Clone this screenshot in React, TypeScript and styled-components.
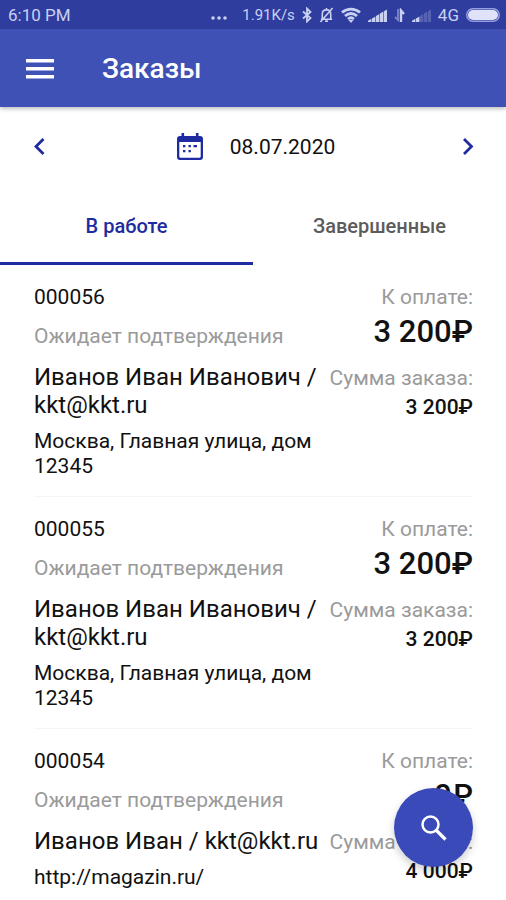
import React, { useState } from "react";
import styled, { createGlobalStyle } from "styled-components";

const colors = {
  statusBar: "#2f3d9e",
  primary: "#3f51b5",
  floating: "#3a4ab8",
  accent: "#1f2ba0",
  statusInk: "#c9d0f2",
  text: "#111111",
  muted: "#9a9a9a",
};

const GlobalStyle = createGlobalStyle`
  *, *::before, *::after { box-sizing: border-box; }
  body {
    margin: 0;
    background: #ffffff;
    color: ${colors.text};
    font-family: Roboto, "Noto Sans", sans-serif;
  }
  h1, h2, p, dl, dt, dd, ul { margin: 0; padding: 0; font-weight: 400; }
  button {
    border: 0;
    padding: 0;
    background: none;
    color: inherit;
    font-family: inherit;
    cursor: pointer;
  }
`;

const Screen = styled.div`
  display: flex;
  flex-direction: column;
  height: 100vh;
  overflow: hidden;
`;

const StatusBar = styled.div`
  display: flex;
  flex: none;
  align-items: center;
  justify-content: space-between;
  height: 29px;
  padding: 1px 6px 0 8px;
  background: ${colors.statusBar};
  color: ${colors.statusInk};
  font-size: 17px;
  line-height: 20px;
`;

const StatusGroup = styled.div`
  display: flex;
  align-items: center;
  gap: 7px;

  svg { display: block; }
`;

const NetworkSpeed = styled.span`
  padding-left: 8px;
  font-size: 15px;
`;

const AppBar = styled.header`
  position: relative;
  display: flex;
  flex: none;
  align-items: center;
  gap: 48px;
  height: 78px;
  padding: 2px 26px 0;
  background: ${colors.primary};
  color: #ffffff;
  box-shadow: 0 2px 4px rgba(0, 0, 0, 0.25);
`;

const IconButton = styled.button`
  display: grid;
  place-items: center;

  svg { display: block; }
`;

const Title = styled.h1`
  font-size: 28px;
  font-weight: 500;
  line-height: 32px;
`;

const DateBar = styled.div`
  display: flex;
  flex: none;
  align-items: center;
  justify-content: space-between;
  height: 80px;
  padding: 0 32px;
  color: ${colors.accent};
`;

const DateButton = styled.button`
  display: flex;
  align-items: center;
  gap: 27px;
  padding-left: 6px;
  font-size: 21px;
  line-height: 24px;

  time { color: ${colors.text}; }
  svg { display: block; }
`;

const Tabs = styled.div`
  display: grid;
  flex: none;
  grid-template-columns: 1fr 1fr;
  height: 78px;
`;

const Tab = styled.button<{ $active: boolean }>`
  border-top: 3px solid transparent;
  border-bottom: 3px solid ${(p) => (p.$active ? colors.accent : "transparent")};
  color: ${(p) => (p.$active ? colors.accent : "#5c5c5c")};
  font-size: 20px;
  font-weight: 500;
  line-height: 24px;
`;

const OrderList = styled.ul`
  flex: 1;
  min-height: 0;
  padding: 0 33px 0 34px;
  overflow-y: auto;
  scrollbar-width: none;
  list-style: none;
`;

const OrderItem = styled.li`
  display: flex;
  justify-content: space-between;
  gap: 8px;
  padding: 20px 0 18px;
  border-bottom: 1px solid #f5f5f5;
`;

const Details = styled.div`
  flex: 1;
  min-width: 0;
`;

const OrderNumber = styled.h2`
  font-size: 21px;
  line-height: 24px;
`;

const OrderState = styled.p`
  margin-top: 15px;
  color: ${colors.muted};
  font-size: 21px;
  line-height: 24px;
`;

const Customer = styled.p`
  margin-top: 15px;
  font-size: 24px;
  line-height: 28px;
`;

const Address = styled.p`
  margin-top: 10px;
  font-size: 21px;
  line-height: 25px;
`;

const Totals = styled.dl`
  flex: none;
  text-align: right;
`;

const TotalLabel = styled.dt`
  color: ${colors.muted};
  font-size: 21px;
  line-height: 24px;
`;

const Total = styled.dd<{ $large?: boolean }>`
  margin: ${(p) => (p.$large ? "7px 0 18px" : "5px 0 0")};
  font-size: ${(p) => (p.$large ? 31 : 21)}px;
  font-weight: 500;
  line-height: ${(p) => (p.$large ? 32 : 24)}px;
`;

const OrderRow = styled(OrderItem)`
  padding-bottom: 17px;
`;

const SearchButton = styled.button`
  position: fixed;
  right: 33px;
  bottom: 33px;
  display: grid;
  place-items: center;
  width: 79px;
  height: 79px;
  border-radius: 50%;
  background: ${colors.floating};
  color: #ffffff;
  box-shadow: 0 4px 8px rgba(0, 0, 0, 0.2);
`;

const MoreIcon = () => (
  <svg width="16" height="20" viewBox="0 0 16 20" fill="currentColor" aria-hidden="true">
    <circle cx="2" cy="13" r="1.800" />
    <circle cx="8" cy="13" r="1.800" />
    <circle cx="14" cy="13" r="1.800" />
  </svg>
);

const BluetoothIcon = () => (
  <svg width="10" height="16" viewBox="0 0 10 16" fill="none" stroke="currentColor" strokeWidth="1.800" aria-hidden="true">
    <path d="M1 4.500 8.500 11 5 14.500V1.500L8.500 5 1 11.500" />
  </svg>
);

const MutedBellIcon = () => (
  <svg width="15" height="18" viewBox="0 0 16 18" fill="none" stroke="currentColor" strokeWidth="1.700" aria-hidden="true">
    <path d="M2 13.500h12M3.500 13V8c0-3 2-4.500 4.500-4.500S12.500 5 12.500 8v5M8 1.500v2M6.500 15.500h3M14.500 1.500 1.500 16.500" />
  </svg>
);

const WifiIcon = () => (
  <svg width="20" height="16" viewBox="0 0 20 16" fill="none" stroke="currentColor" strokeWidth="2.800" aria-hidden="true">
    <path d="M1 5.500c5.500-4.600 12.500-4.600 18 0M4 9c3.800-3.200 8.200-3.200 12 0M7 12c2-1.600 4-1.600 6 0" />
    <path d="m7.500 13 2.500 3 2.500-3z" fill="currentColor" stroke="none" />
  </svg>
);

const SignalIcon = ({ level }: { level: number }) => (
  <svg width="19" height="14" viewBox="0 0 19 14" fill="currentColor" aria-hidden="true">
    {[0, 1, 2, 3, 4].map((i) => (
      <path
        key={i}
        d={`M${i * 4} 14V${12.8 - i * 2.4}L${i * 4 + 3.4} ${10.8 - i * 2.4}V14z`}
        opacity={i < level ? 1 : 0.25}
      />
    ))}
  </svg>
);

const DataIcon = () => (
  <svg width="11" height="14" viewBox="0 0 11 14" fill="none" stroke="currentColor" aria-hidden="true">
    <path d="M4 1v11L1 9" strokeWidth="1.800" opacity=".5" />
    <path d="M7 14V2.500l3 3.500" strokeWidth="2.400" />
  </svg>
);

const BatteryIcon = () => (
  <svg width="34" height="14" viewBox="0 0 34 14" aria-hidden="true">
    <rect x=".75" y=".75" width="32.500" height="12.500" rx="6.200" fill="none" stroke="#94a0de" strokeWidth="1.500" />
    <rect x="2" y="2" width="30" height="10" rx="5" fill="#dfe2f8" />
  </svg>
);

const MenuIcon = () => (
  <svg width="28" height="20" viewBox="0 0 28 20" fill="currentColor" aria-hidden="true">
    <path d="M0 0h28v3.400H0zM0 8h28v3.400H0zM0 16h28v3.400H0z" />
  </svg>
);

const ChevronIcon = ({ d }: { d: string }) => (
  <svg width="16" height="20" viewBox="0 0 16 20" fill="none" stroke="currentColor" strokeWidth="2.800" aria-hidden="true">
    <path d={d} />
  </svg>
);

const CalendarIcon = () => (
  <svg width="26" height="28" viewBox="0 0 26 28" fill="currentColor" aria-hidden="true">
    <path
      fillRule="evenodd"
      d="M4.500 0h2.600v3h11.800V0h2.600v3H23a3 3 0 0 1 3 3v18a3 3 0 0 1-3 3H3a3 3 0 0 1-3-3V6a3 3 0 0 1 3-3h1.500zM2.300 9v14.600c0 .7.500 1.200 1.200 1.200h19c.7 0 1.200-.500 1.200-1.200V9z"
    />
    <path d="M6 12h2.400v2.200H6zM11.500 12h2.400v2.200h-2.400zM16.500 12h3.500v2.200h-3.500zM6 17h2.400v2.200H6zM11.500 17h2.400v2.200h-2.400z" />
  </svg>
);

const SearchIcon = () => (
  <svg width="26" height="26" viewBox="0 0 26 26" fill="none" stroke="currentColor" aria-hidden="true">
    <circle cx="9.500" cy="9.500" r="8" strokeWidth="2.500" />
    <path d="m15 15 9.500 9.500" strokeWidth="3.200" />
  </svg>
);

interface Order {
  id: string;
  state: string;
  customer: string;
  address: string;
  due: string;
  sum: string;
}

const orders: Order[] = [
  {
    id: "000056",
    state: "Ожидает подтверждения",
    customer: "Иванов Иван Иванович / kkt@kkt.ru",
    address: "Москва, Главная улица, дом 12345",
    due: "3 200₽",
    sum: "3 200₽",
  },
  {
    id: "000055",
    state: "Ожидает подтверждения",
    customer: "Иванов Иван Иванович / kkt@kkt.ru",
    address: "Москва, Главная улица, дом 12345",
    due: "3 200₽",
    sum: "3 200₽",
  },
  {
    id: "000054",
    state: "Ожидает подтверждения",
    customer: "Иванов Иван / kkt@kkt.ru",
    address: "http://magazin.ru/",
    due: "0₽",
    sum: "4 000₽",
  },
];

const tabs = ["В работе", "Завершенные"];

export default function App() {
  const [active, setActive] = useState(0);

  return (
    <Screen>
      <GlobalStyle />
      <StatusBar>
        <span>6:10 PM</span>
        <StatusGroup>
          <MoreIcon />
          <NetworkSpeed>1.91K/s</NetworkSpeed>
          <BluetoothIcon />
          <MutedBellIcon />
          <WifiIcon />
          <SignalIcon level={5} />
          <DataIcon />
          <SignalIcon level={2} />
          <span>4G</span>
          <BatteryIcon />
        </StatusGroup>
      </StatusBar>

      <AppBar>
        <IconButton type="button" aria-label="Меню">
          <MenuIcon />
        </IconButton>
        <Title>Заказы</Title>
      </AppBar>

      <DateBar>
        <IconButton type="button" aria-label="Предыдущий день">
          <ChevronIcon d="M11.500 2 4 9.500l7.500 7.500" />
        </IconButton>
        <DateButton type="button">
          <CalendarIcon />
          <time dateTime="2020-07-08">08.07.2020</time>
        </DateButton>
        <IconButton type="button" aria-label="Следующий день">
          <ChevronIcon d="m6 2 7.500 7.500L6 17" />
        </IconButton>
      </DateBar>

      <Tabs role="tablist">
        {tabs.map((label, i) => (
          <Tab
            key={label}
            type="button"
            role="tab"
            aria-selected={i === active}
            $active={i === active}
            onClick={() => setActive(i)}
          >
            {label}
          </Tab>
        ))}
      </Tabs>

      <OrderList>
        {orders.map((order) => (
          <OrderRow key={order.id}>
            <Details>
              <OrderNumber>{order.id}</OrderNumber>
              <OrderState>{order.state}</OrderState>
              <Customer>{order.customer}</Customer>
              <Address>{order.address}</Address>
            </Details>
            <Totals>
              <TotalLabel>К оплате:</TotalLabel>
              <Total $large>{order.due}</Total>
              <TotalLabel>Сумма заказа:</TotalLabel>
              <Total>{order.sum}</Total>
            </Totals>
          </OrderRow>
        ))}
      </OrderList>

      <SearchButton type="button" aria-label="Поиск">
        <SearchIcon />
      </SearchButton>
    </Screen>
  );
}
